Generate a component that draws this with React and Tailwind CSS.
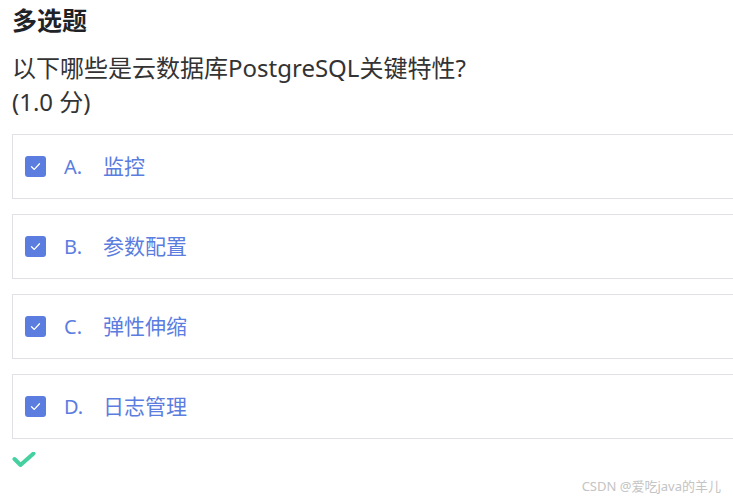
import React from 'react';

const options = [
  { key: 'A', text: '监控' },
  { key: 'B', text: '参数配置' },
  { key: 'C', text: '弹性伸缩' },
  { key: 'D', text: '日志管理' },
];

function CheckBox() {
  return (
    <span className="flex h-[21px] w-[21px] items-center justify-center rounded-[3px] bg-[#5b7de0]">
      <svg width="13" height="13" viewBox="0 0 13 13" fill="none">
        <path d="M2.5 6.8 L5.3 9.4 L10.5 3.8" stroke="#fff" strokeWidth="1.3" strokeLinecap="round" strokeLinejoin="round" />
      </svg>
    </span>
  );
}

export default function App() {
  return (
    <div
      className="relative h-[502px] w-[733px] overflow-hidden bg-white"
      style={{ fontFamily: '"Noto Sans", "Noto Sans CJK SC", sans-serif' }}
    >
      <div className="pl-[12px] pt-[3px]">
        <h2 className="text-[25px] font-bold leading-[34px] text-[#1f2328]">多选题</h2>
        <p className="mt-[14px] text-[24px] leading-[34px] text-[#333]">以下哪些是云数据库PostgreSQL关键特性?</p>
        <p className="text-[24px] leading-[34px] text-[#333]">(1.0 分)</p>

        {/* options */}
        <div className="mt-[15px] flex flex-col gap-[15px]">
          {options.map((o) => (
            <div
              key={o.key}
              className="flex h-[65px] w-[760px] items-center border border-[#e0e0e6] pl-[12px]"
            >
              <CheckBox />
              <span className="ml-[18px] w-[39px] text-[20px] text-[#5b7de0]">{o.key}.</span>
              <span className="text-[21px] text-[#5b7de0]">{o.text}</span>
            </div>
          ))}
        </div>

        <div className="mt-[13px]">
          <svg width="26" height="18" viewBox="0 0 26 18" fill="none">
            <path d="M2.5 7 L8.5 13 L21.5 1.5" stroke="#45d19f" strokeWidth="4" strokeLinecap="round" strokeLinejoin="round" />
          </svg>
        </div>
      </div>

      <div className="absolute bottom-[6px] right-[12px] text-[13px] text-[#c4c4c4]">CSDN @爱吃java的羊儿</div>
    </div>
  );
}
